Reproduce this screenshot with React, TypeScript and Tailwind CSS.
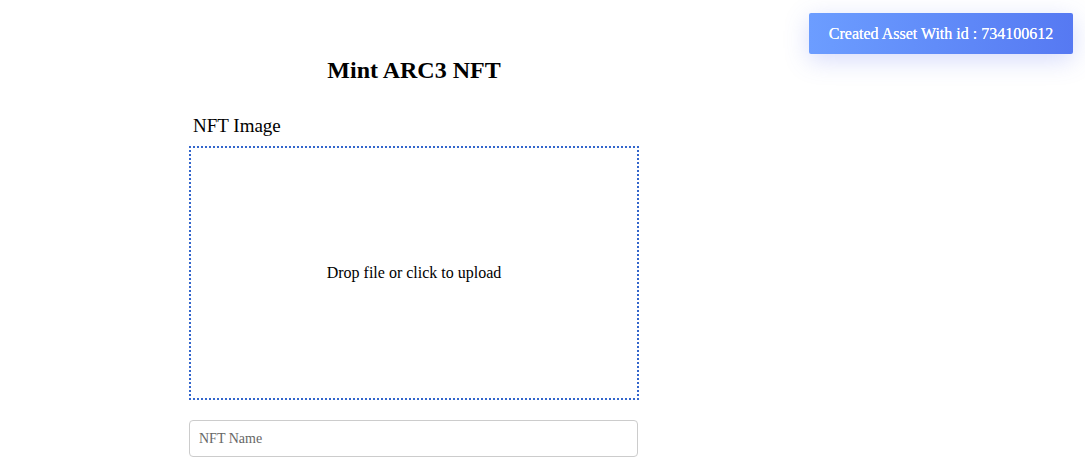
import React from "react";

export default function App() {
  return (
    <div className="relative min-h-[464px] w-full bg-white font-['Liberation_Serif',serif] text-black">
      <div className="flex w-[450px] flex-col pt-[55px] ml-[189px]">
        <h1 className="text-center text-[24px] font-bold leading-[30px]">Mint ARC3 NFT</h1>

        <label className="mt-[29px] pl-[4px] text-[19px] leading-[24px]">NFT Image</label>
        <div className="mt-[8px] flex h-[254px] items-center justify-center border-2 border-dotted border-[#3366cc]">
          <span className="text-[16px]">Drop file or click to upload</span>
        </div>

        <input
          type="text"
          placeholder="NFT Name"
          className="mt-[20px] h-[37px] w-[449px] rounded-[4px] border border-[#cccccc] px-[9px] text-[14px] placeholder:text-[#666666] outline-none"
        />
      </div>

      <div className="absolute right-[12px] top-[13px] flex h-[41px] w-[264px] items-center justify-center rounded-[2px] bg-gradient-to-r from-[#6c9dff] to-[#5679f2] shadow-[0_6px_24px_rgba(90,110,240,0.25)]">
        <span className="text-[16px] font-medium text-white [text-shadow:0_0_0.4px_#fff]">Created Asset With id : 734100612</span>
      </div>
    </div>
  );
}
